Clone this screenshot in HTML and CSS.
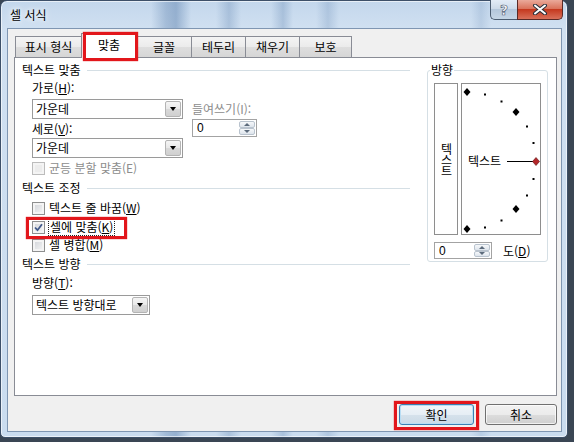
FILE: index.html
```html
<!DOCTYPE html>
<html lang="ko">
<head>
  <meta charset="utf-8">
  <title>셀 서식</title>
  <link rel="stylesheet" href="styles.css">
</head>
<body>
  <div class="window">
    <div class="titlebar">
      <span class="title">셀 서식</span>
      <div class="caption">
        <span class="capbtn help">?</span>
        <span class="capbtn close">
          <svg width="16" height="11" viewBox="0 0 16 11">
            <path d="M3 1.5 L13 9.5 M13 1.5 L3 9.5" stroke="#2a2f3a" stroke-width="4" stroke-linecap="round"/>
            <path d="M3 1.5 L13 9.5 M13 1.5 L3 9.5" stroke="#fff" stroke-width="2" stroke-linecap="round"/>
          </svg>
        </span>
      </div>
    </div>

    <div class="client">
      <div class="tabs">
        <div class="tab w66">표시 형식</div>
        <div class="tab active hl w56">맞춤</div>
        <div class="tab w54">글꼴</div>
        <div class="tab w54">테두리</div>
        <div class="tab w54">채우기</div>
        <div class="tab w53">보호</div>
      </div>

      <div class="panel">
        <div class="left">
          <div class="group"><span>텍스트 맞춤</span></div>

          <div class="fields">
            <div class="lbl">가로(<u>H</u>):</div>
            <div></div>
            <div class="combo"><span>가운데</span><span class="drop"></span></div>
            <div class="lbl dis">들여쓰기(I):</div>
            <div class="lbl mid">세로(<u>V</u>):</div>
            <div class="spin w65"><span>0</span><span class="spinbtn"><span class="up"></span><span class="down"></span></span></div>
            <div class="combo"><span>가운데</span><span class="drop"></span></div>
          </div>

          <div class="check dis m2"><span class="box"></span><span>균등 분할 맞춤(E)</span></div>

          <div class="group m4"><span>텍스트 조정</span></div>
          <div class="check m4"><span class="box"></span><span>텍스트 줄 바꿈(<u>W</u>)</span></div>
          <div class="check hl m3">
            <span class="box"><svg width="9" height="9" viewBox="0 0 9 9"><path d="M1 4.5 L3.5 7.2 L8 1.2" fill="none" stroke="#41598a" stroke-width="1.8"/></svg></span>
            <span class="focus">셀에 맞춤(<u>K</u>)</span>
          </div>
          <div class="check m2"><span class="box"></span><span>셀 병합(<u>M</u>)</span></div>

          <div class="group m3"><span>텍스트 방향</span></div>
          <div class="lbl sub m3">방향(<u>T</u>):</div>
          <div class="combo sub short m4"><span>텍스트 방향대로</span><span class="drop"></span></div>
        </div>

        <fieldset class="orient">
          <legend>방향</legend>
          <div class="dial">
            <div class="vtext"><span>텍스트</span></div>
            <div class="arc">
              <svg width="78" height="150" viewBox="0 0 78 150">
                <g fill="#000">
                  <polygon points="5,4 8.5,8 5,12 1.5,8"/>
                  <rect x="22" y="9.5" width="2" height="2"/>
                  <rect x="38.5" y="16.5" width="2" height="2"/>
                  <polygon points="54,24 57.5,28 54,32 50.5,28"/>
                  <rect x="64" y="41.5" width="2" height="2"/>
                  <rect x="70.5" y="58" width="2" height="2"/>
                  <rect x="70.5" y="94" width="2" height="2"/>
                  <rect x="64" y="110.5" width="2" height="2"/>
                  <polygon points="54,121 57.5,125 54,129 50.5,125"/>
                  <rect x="38.5" y="135.5" width="2" height="2"/>
                  <rect x="22" y="142.5" width="2" height="2"/>
                  <polygon points="5,141 8.5,145 5,149 1.5,145"/>
                </g>
                <text x="6" y="81.5" class="arctext">텍스트</text>
                <line x1="45" y1="77.5" x2="71" y2="77.5" stroke="#000" stroke-width="1"/>
                <polygon points="74,73.5 77.5,77.5 74,81.5 70.5,77.5" fill="#b3262a" stroke="#5a1010" stroke-width="0.6"/>
              </svg>
            </div>
          </div>
          <div class="degree">
            <div class="spin w58"><span>0</span><span class="spinbtn"><span class="up"></span><span class="down"></span></span></div>
            <span class="deg">도(<u>D</u>)</span>
          </div>
        </fieldset>
      </div>

      <div class="actions">
        <button class="btn ok hl">확인</button>
        <button class="btn cancel">취소</button>
      </div>
    </div>
  </div>
</body>
</html>
```

FILE: styles.css
```css
*,
*::before,
*::after {
  box-sizing: border-box;
}

body {
  margin: 0;
  width: 574px;
  height: 442px;
  overflow: hidden;
  background: #3a4654;
  font: 12px/16px "Noto Sans CJK KR", "Noto Sans", sans-serif;
  color: #000;
}

u {
  text-decoration: underline;
  text-underline-offset: 1px;
}

/* window frame */

.window {
  width: 568px;
  height: 438px;
  display: flex;
  flex-direction: column;
  padding: 0 5px 5px 6px;
  border: 1px solid #3d5069;
  border-radius: 7px 7px 5px 5px;
  box-shadow: inset 0 0 0 1px rgba(255, 255, 255, .6);
  background:
    linear-gradient(90deg, transparent 150px, rgba(70, 110, 160, .3) 165px, rgba(70, 110, 160, .4) 175px, transparent 190px,
      transparent 215px, rgba(70, 110, 160, .25) 228px, transparent 240px,
      transparent 270px, rgba(70, 110, 160, .25) 282px, transparent 292px,
      transparent 315px, rgba(70, 110, 160, .2) 327px, transparent 338px,
      transparent 470px, rgba(70, 110, 160, .15) 480px, transparent 490px),
    linear-gradient(#c3d7ec, #d0e0f1 28px, #cadcef);
}

.titlebar {
  height: 27px;
  display: flex;
  align-items: center;
  padding-left: 3px;
}

.title {
  text-shadow: 0 0 5px #fff, 0 0 8px rgba(255, 255, 255, .9);
}

.caption {
  display: flex;
  align-self: flex-start;
  margin: -1px -1px 0 auto;
}

.capbtn {
  height: 20px;
  display: flex;
  align-items: center;
  justify-content: center;
  border: 1px solid #4b5c70;
  border-top: none;
}

.help {
  width: 27px;
  border-right: none;
  border-radius: 0 0 0 5px;
  background: linear-gradient(#e3ecf6, #cbd9e8 50%, #b4c7db 50%, #c6d6e6);
  color: #fff;
  font: bold 14px/1 "DejaVu Sans", sans-serif;
  -webkit-text-stroke: 0.7px #56657a;
}

.close {
  width: 46px;
  border-color: #5a2a26;
  border-radius: 0 0 5px 0;
  background: linear-gradient(#eaa99a, #d86d55 50%, #c5391f 50%, #d9705a);
}

/* client area */

.client {
  flex: 1;
  border: 1px solid #7f96b2;
  background: #f0f0f0;
  padding: 4px 4px 0 6px;
}

.tabs {
  display: flex;
  align-items: flex-end;
  height: 24px;
  margin-left: 1px;
}

.tab {
  height: 21px;
  border: 1px solid #898c95;
  border-bottom: none;
  border-right: none;
  background: linear-gradient(#f4f4f4, #ebebeb 50%, #dedede 50%, #d6d6d6);
  text-align: center;
  line-height: 19px;
}

.tab:last-child {
  border-right: 1px solid #898c95;
}

.tab.active {
  height: 25px;
  margin-bottom: -1px;
  border-right: 1px solid #898c95;
  background: #fff;
  line-height: 22px;
  position: relative;
  z-index: 1;
}

.tab.active + .tab {
  border-left: none;
}

.w66 { width: 66px; }
.w56 { width: 56px; }
.w54 { width: 54px; }
.w53 { width: 53px; }

.panel {
  height: 339px;
  display: flex;
  gap: 17px;
  padding: 4px 8px 0 7px;
  border: 1px solid #898c95;
  background: #fff;
}

.left {
  width: 388px;
}

.group {
  display: flex;
  align-items: center;
  gap: 6px;
}

.group::after {
  content: "";
  flex: 1;
  height: 1px;
  background: #d5dfe5;
}

.m2 { margin-top: 2px; }
.m3 { margin-top: 3px; }
.m4 { margin-top: 4px; }

.sub {
  margin-left: 10px;
}

.fields {
  display: grid;
  grid-template-columns: 151px auto;
  grid-template-rows: 19px 20px 19px 20px;
  column-gap: 9px;
  margin-top: 2px;
  padding-left: 10px;
}

.lbl.mid,
.lbl.dis {
  align-self: center;
}

.dis {
  color: #8d8d8d;
}

.combo {
  display: flex;
  align-items: center;
  height: 20px;
  padding-left: 3px;
  border: 1px solid #9a9a9a;
  background: #fff;
}

.combo.short {
  width: 118px;
}

.drop {
  width: 16px;
  height: 16px;
  margin: 0 1px 0 auto;
  display: flex;
  align-items: center;
  justify-content: center;
  border: 1px solid #b4b4b4;
  border-radius: 2px;
  background: linear-gradient(#f5f5f5, #e8e8e8 50%, #d9d9d9 50%, #d0d0d0);
}

.drop::before {
  content: "";
  border-left: 3.5px solid transparent;
  border-right: 3.5px solid transparent;
  border-top: 4px solid #000;
}

.spin {
  height: 18px;
  display: flex;
  align-items: center;
  padding-left: 4px;
  border: 1px solid #a3a3a3;
  background: #fff;
  font-family: "Liberation Sans", sans-serif;
}

.w65 { width: 65px; }
.w58 { width: 58px; height: 17px; }

.spinbtn {
  margin-left: auto;
  margin-right: 1px;
  width: 16px;
  height: calc(100% - 2px);
  display: flex;
  flex-direction: column;
}

.spinbtn span {
  flex: 1;
  display: flex;
  align-items: center;
  justify-content: center;
  border: 1px solid #b9c3ce;
  border-radius: 2px;
  background: linear-gradient(#f6f8fa, #dde4ec);
}

.spinbtn .up::before {
  content: "";
  border-left: 3px solid transparent;
  border-right: 3px solid transparent;
  border-bottom: 3px solid #5c6b7c;
}

.spinbtn .down::before {
  content: "";
  border-left: 3px solid transparent;
  border-right: 3px solid transparent;
  border-top: 3px solid #5c6b7c;
}

/* check boxes */

.check {
  display: flex;
  align-items: center;
  gap: 4px;
  padding-left: 10px;
}

.box {
  width: 13px;
  height: 13px;
  display: flex;
  align-items: center;
  justify-content: center;
  border: 1px solid #8e8f8f;
  background: linear-gradient(135deg, #cfd2d7, #f7f7f7);
  box-shadow: inset 0 0 0 2px #f4f4f4;
}

.check.dis .box {
  border-color: #bcbcbc;
  background: #ececec;
}

.focus {
  outline: 1px dotted #222;
  padding: 0 1px;
}

/* orientation group */

.orient {
  width: 121px;
  height: 200px;
  margin: 0;
  padding: 0 6px 2px 6px;
  border: 1px solid #d5dfe5;
  border-radius: 3px;
}

.orient legend {
  margin-left: -4px;
  padding: 0 1px;
}

.dial {
  display: flex;
  gap: 3px;
  margin-top: 5px;
}

.vtext {
  width: 24px;
  height: 152px;
  display: flex;
  align-items: center;
  justify-content: center;
  border: 1px solid #8e8e8e;
}

.vtext span {
  writing-mode: vertical-rl;
  text-orientation: upright;
  letter-spacing: -1px;
  line-height: 14px;
}

.arc {
  width: 80px;
  height: 152px;
  border: 1px solid #8e8e8e;
}

.arc svg {
  display: block;
}

.arctext {
  font: 12px "Noto Sans CJK KR", sans-serif;
}

.degree {
  display: flex;
  align-items: center;
  gap: 11px;
  margin-top: 7px;
}

/* buttons */

.actions {
  display: flex;
  justify-content: flex-end;
  gap: 11px;
  margin-top: 8px;
}

.btn {
  width: 72px;
  height: 21px;
  padding: 0;
  font: inherit;
  line-height: 19px;
  color: #000;
  border: 1px solid #707070;
  border-radius: 3px;
  background: linear-gradient(#f2f2f2, #ebebeb 50%, #dddddd 50%, #cfcfcf);
  box-shadow: inset 0 0 0 1px rgba(255, 255, 255, .7);
}

.btn.ok {
  width: 75px;
  border-color: #3c7fb1;
  background: linear-gradient(#f0f5f9, #e6eef5 50%, #d6e2ec 50%, #cbdae6);
  box-shadow: inset 0 0 0 1px #b8ddf4;
}

/* red highlight annotations */

.hl {
  position: relative;
}

.hl::after {
  content: "";
  position: absolute;
  border: 3px solid #e2161b;
  box-shadow: 0 0 1px #e2161b;
  pointer-events: none;
}

.tab.hl::after {
  left: 1px;
  top: -2px;
  width: 55px;
  height: 29px;
}

.check.hl::after {
  left: 4px;
  top: -2px;
  width: 101px;
  height: 22px;
}

.btn.hl::after {
  left: -6px;
  top: -4px;
  width: 85px;
  height: 29px;
}
```
